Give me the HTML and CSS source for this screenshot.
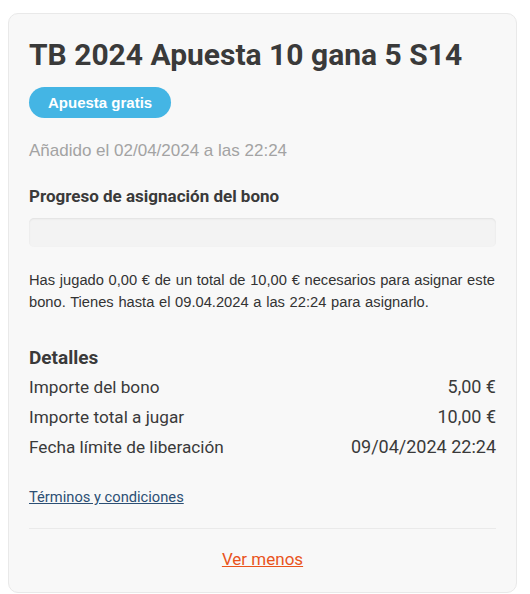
FILE: index.html
```
<!DOCTYPE html>
<html lang="es">
<head>
    <meta charset="UTF-8">
    <meta name="viewport" content="width=device-width, initial-scale=1.0">
    <title>Bono</title>
    <link rel="stylesheet" href="styles.css">
</head>
<body>
    <div class="card">
        <h2 class="title">TB 2024 Apuesta 10 gana 5 S14</h2>
        <span class="badge">Apuesta gratis</span>
        <p class="added">Añadido el 02/04/2024 a las 22:24</p>

        <!-- progreso -->
        <h4 class="progress-title">Progreso de asignación del bono</h4>
        <div class="progress"></div>
        <p class="note">Has jugado 0,00 € de un total de 10,00 € necesarios para asignar este bono. Tienes hasta el 09.04.2024 a las 22:24 para asignarlo.</p>

        <!-- detalles -->
        <h3 class="details-title">Detalles</h3>
        <div class="row"><span class="label">Importe del bono</span><span class="value">5,00 €</span></div>
        <div class="row"><span class="label">Importe total a jugar</span><span class="value">10,00 €</span></div>
        <div class="row"><span class="label">Fecha límite de liberación</span><span class="value">09/04/2024 22:24</span></div>

        <a class="terms" href="#">Términos y condiciones</a>

        <div class="footer">
            <a class="less" href="#">Ver menos</a>
        </div>
    </div>
</body>
</html>
```
FILE: styles.css
```
body {
    margin: 0;
    padding: 0;
    background: #ffffff;
    font-family: Roboto, Arial, sans-serif;
    color: #3a3a3a;
}
.card {
    margin: 13px 13px 2px 8px;
    padding: 20px 20px 21px 20px;
    background: #f8f8f8;
    border: 1px solid #e9e9e9;
    border-radius: 10px;
}
.title {
    margin: 1px 0 0 0;
    font-size: 30px;
    font-weight: 700;
    line-height: 40px;
    color: #3a3a3a;
}
.badge {
    display: inline-block;
    margin-top: 12px;
    padding: 0 19px;
    height: 31px;
    line-height: 31px;
    border-radius: 16px;
    background: #44b5e4;
    color: white;
    font-family: "Liberation Sans", Arial, sans-serif;
    font-weight: 700;
    font-size: 15px;
}
.added {
    margin: 22px 0 0 0;
    font-family: "Liberation Sans", Arial, sans-serif;
    font-size: 17px;
    line-height: 22px;
    color: #a3a3a3;
}
.progress-title {
    margin: 22px 0 0 0;
    font-size: 17px;
    font-weight: 700;
    line-height: 24px;
}
.progress {
    margin-top: 10px;
    height: 29px;
    background: #f3f3f3;
    border-radius: 5px;
    box-shadow: inset 0 1px 2px rgba(0, 0, 0, 0.08);
}
.note {
    margin: 22px 0 0 0;
    font-family: "Liberation Sans", Arial, sans-serif;
    font-size: 14.7px;
    word-spacing: 0.6px;
    line-height: 22px;
    color: #333;
}
.details-title {
    margin: 31px 0 0 0;
    font-size: 19px;
    font-weight: 700;
    line-height: 28px;
}
.row {
    display: flex;
    justify-content: space-between;
    line-height: 30px;
    color: #3a3a3a;
}
.label {
    font-size: 17.2px;
}
.value {
    font-size: 18px;
}
.terms {
    display: inline-block;
    margin-top: 25px;
    font-size: 14.7px;
    line-height: 20px;
    color: #2c4f74;
}
.footer {
    margin-top: 21px;
    padding-top: 18px;
    border-top: 1px solid #eaeaea;
    text-align: center;
}
.less {
    font-size: 17px;
    line-height: 24px;
    color: #e9541c;
}
```
